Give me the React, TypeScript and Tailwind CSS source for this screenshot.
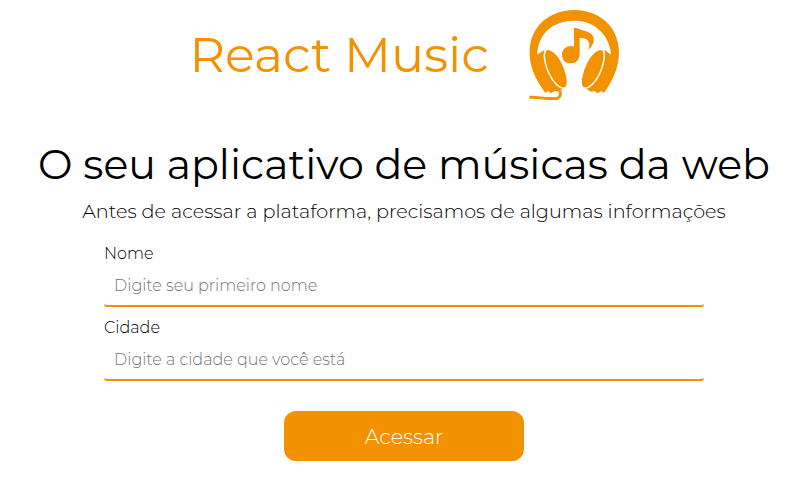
import React from "react";

function HeadphonesLogo() {
  return (
    <svg className="h-[90px] w-[90px] shrink-0" viewBox="27 30 270 270" fill="#f39200" aria-hidden="true">
      <path d="M39 214C24 170 24 126 47 89C72 50 117 30 163 30C209 30 252 50 277 87C301 126 302 170 287 214C278 238 267 259 252 278L242 273L234 280L222 273L212 275L197 265L237 220L254 150L273 164C271 128 252 98 226 80C207 67 187 62 162 62C133 62 105 70 83 90C64 107 53 135 51 164L73 150L89 220L130 265L115 275L105 273L92 280L85 273L76 278C61 259 48 238 39 214Z" />
      <path d="M81 150C99 150 119 172 130 202C141 229 144 256 135 262C119 266 98 242 86 213C75 185 71 157 81 150Z" stroke="#fff" strokeWidth="9" />
      <path d="M245 150C227 150 207 172 196 202C185 229 182 256 191 262C207 266 228 242 240 213C251 185 255 157 245 150Z" stroke="#fff" strokeWidth="9" />
      <path d="M81 150C99 150 119 172 130 202C141 229 144 256 135 262C119 266 98 242 86 213C75 185 71 157 81 150Z" />
      <path d="M245 150C227 150 207 172 196 202C185 229 182 256 191 262C207 266 228 242 240 213C251 185 255 157 245 150Z" />
      <path d="M162 84C170 84 175 86 184 90C212 96 224 105 221 124C219 135 212 144 205 150C210 137 209 126 202 120C195 114 187 113 179 114L179 158C179 179 169 190 152 190C136 190 126 179 126 164C126 149 138 138 152 138C157 138 159 139 162 141Z" />
      <path d="M28 292C42 290 56 293 73 295L107 296C119 295 123 287 120 272" fill="none" stroke="#f39200" strokeWidth="9" />
    </svg>
  );
}

function Field({ label, placeholder }: { label: string; placeholder: string }) {
  return (
    <label className="block h-[74px]">
      <span className="block h-[22px] text-[16px] leading-[22px]">{label}</span>
      <input
        className="block h-[42px] w-full rounded-[3px] border-b-2 border-[#f39200] bg-white px-[10px] text-[16px] font-light outline-none placeholder:text-[#757575]"
        placeholder={placeholder}
      />
    </label>
  );
}

export default function App() {
  return (
    <main className="h-[481px] w-[808px] overflow-hidden bg-white font-['Montserrat','Inter',sans-serif] font-light whitespace-nowrap text-black">
      <header className="flex h-[100px] items-center justify-center gap-[39px] pt-[10px]">
        <h1 className="w-[300px] text-[49.2px] leading-[60px] font-normal text-[#f39200] -mt-[2px]">React Music</h1>
        <HeadphonesLogo />
      </header>
      <h2 className="mt-[39px] text-center text-[41.15px] leading-[50px] font-normal">O seu aplicativo de músicas da web</h2>
      <p className="mt-[10px] text-center text-[19.2px] leading-[24px] tracking-[0.02px]">Antes de acessar a plataforma, precisamos de algumas informações</p>
      <form className="mx-auto mt-[20px] w-[600px]">
        <Field label="Nome" placeholder="Digite seu primeiro nome" />
        <Field label="Cidade" placeholder="Digite a cidade que você está" />
        <button type="button" className="mx-auto mt-[20px] block h-[50px] w-[240px] rounded-[12px] bg-[#f39200] pt-[2px] text-[20.8px] font-light text-white">Acessar</button>
      </form>
    </main>
  );
}
